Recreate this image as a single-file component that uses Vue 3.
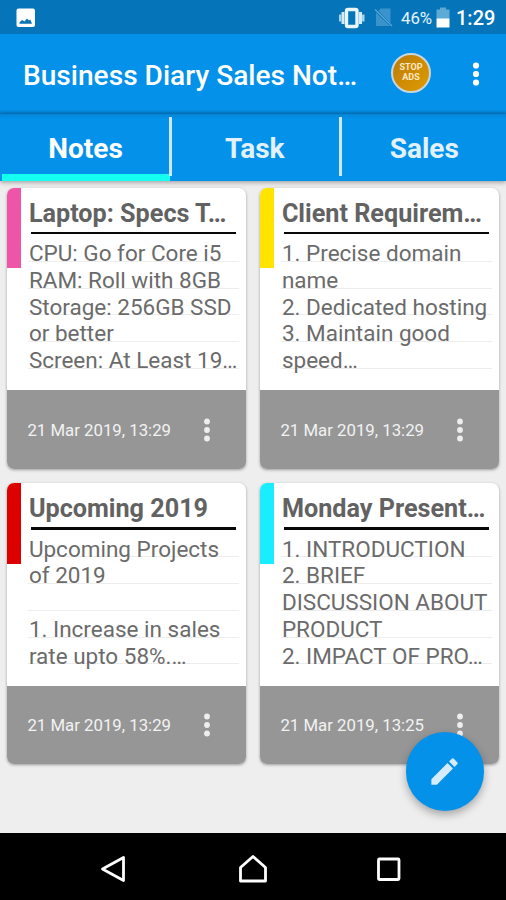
<script setup>
const notes = [
  { title: 'Laptop: Specs T…', tone: 'pink', date: '21 Mar 2019, 13:29', lines: ['CPU: Go for Core i5', 'RAM: Roll with 8GB', 'Storage: 256GB SSD', 'or better', 'Screen: At Least 19…'] },
  { title: 'Client Requirem…', tone: 'yellow', date: '21 Mar 2019, 13:29', lines: ['1. Precise domain', 'name', '2. Dedicated hosting', '3. Maintain good', 'speed…'] },
  { title: 'Upcoming 2019', tone: 'red', date: '21 Mar 2019, 13:29', lines: ['Upcoming Projects', 'of 2019', '', '1. Increase in sales', 'rate upto 58%.…'] },
  { title: 'Monday Present…', tone: 'cyan', date: '21 Mar 2019, 13:25', lines: ['1. INTRODUCTION', '2. BRIEF', 'DISCUSSION ABOUT', 'PRODUCT', '2. IMPACT OF PRO…'] },
]
const tabs = ['Notes', 'Task', 'Sales']
</script>

<template>
  <div class="screen">
    <header class="status">
      <svg class="photo" width="20" height="20" viewBox="0 0 20 20">
        <rect x=".5" y=".5" width="18.500" height="18.500" rx="2" fill="#fff" />
        <path d="M3.500 15.700v-1.200l2.500-2.500 2.500 1.500 2.500-3 2 2 1.300-1 1.700 4.200z" fill="#0574b8" />
      </svg>
      <svg class="vibrate" width="28" height="22" viewBox="0 0 28 22">
        <rect x="8.500" y="2.500" width="10.500" height="17" rx="1.500" fill="none" stroke="#e8f5fd" stroke-width="3.400" />
        <path d="M5 5v12M22.500 5v12" stroke="#d3eaf8" stroke-width="3" />
        <path d="M2.200 7.500v7M25.300 7.500v7" stroke="#a9d4ee" stroke-width="2.400" />
      </svg>
      <svg class="sim" width="20" height="21" viewBox="0 0 20 21">
        <path d="M6.500 1.500H16.500V16L4.500 4z" fill="#3a93ca" />
        <path d="M2 5.500L16 19H2z" fill="#3a93ca" />
        <path d="M1 2.500l17 16.500" stroke="#5aa8d6" stroke-width="1.300" />
      </svg>
      <span class="percent">46%</span>
      <svg class="battery" width="14" height="21" viewBox="0 0 14 21">
        <path d="M.5 2.500H4V.5h6v2h3.500V12H.5z" fill="#5eaad7" />
        <path d="M.5 11.500h13v9H.5z" fill="#fff" />
      </svg>
      <span class="clock">1:29</span>
    </header>

    <div class="appbar">
      <h1>Business Diary Sales Not…</h1>
      <div class="stop"><span>STOP</span><span>ADS</span></div>
      <svg class="more" width="8" height="24" viewBox="0 0 8 24" fill="#fff">
        <circle cx="4" cy="3.500" r="3.100" /><circle cx="4" cy="12" r="3.100" /><circle cx="4" cy="20.500" r="3.100" />
      </svg>
    </div>

    <nav class="tabs">
      <div v-for="(tab, i) in tabs" :key="tab" class="tab" :class="{ active: i === 0 }">{{ tab }}</div>
    </nav>

    <main class="grid">
      <article v-for="note in notes" :key="note.title" class="card">
        <div class="content">
          <div class="mark" :class="note.tone"></div>
          <div class="text">
            <h2>{{ note.title }}</h2>
            <div class="rule"></div>
            <p v-for="(line, i) in note.lines" :key="i">{{ line }}</p>
          </div>
        </div>
        <footer>
          <span>{{ note.date }}</span>
          <svg width="8" height="24" viewBox="0 0 8 24" fill="#eee">
            <circle cx="4" cy="3.500" r="2.900" /><circle cx="4" cy="12" r="2.900" /><circle cx="4" cy="20.500" r="2.900" />
          </svg>
        </footer>
      </article>
    </main>

    <button class="fab" aria-label="New note">
      <svg width="35" height="35" viewBox="0 0 24 24" fill="#d4ecfc">
        <path d="M3 17.250V21h3.750L17.810 9.940l-3.750-3.750L3 17.250zM20.710 7.040a1 1 0 0 0 0-1.410l-2.340-2.340a1 1 0 0 0-1.410 0l-1.830 1.830 3.750 3.750 1.830-1.830z" />
      </svg>
    </button>

    <div class="navbar">
      <svg width="28" height="30" viewBox="0 0 28 30"><path d="M3.500 15L24.500 3.500v23z" /></svg>
      <svg class="home" width="30" height="30" viewBox="0 0 30 30"><path d="M2.500 13.500L15 2.500l12.500 11v13.500h-25z" /></svg>
      <svg width="26" height="30" viewBox="0 0 26 30"><rect x="2.500" y="5" width="20.500" height="20.500" rx="1" /></svg>
    </div>
  </div>
</template>

<style>
body { margin: 0; }
</style>

<style scoped>
.screen {
  position: relative;
  display: flex;
  flex-direction: column;
  width: 506px;
  height: 900px;
  overflow: hidden;
  background: #eee;
  font-family: Roboto, sans-serif;
}
.status {
  display: flex;
  align-items: center;
  height: 34px;
  box-sizing: border-box;
  padding: 1px 12px 0 16px;
  background: #0574b8;
  color: #fff;
}
.vibrate { margin-left: auto; }
.sim { margin-left: 8px; }
.percent { margin-left: 7px; width: 33px; font-size: 16.800px; color: #e6f4fc; white-space: nowrap; }
.battery { margin-left: 2px; }
.clock { margin-left: 6px; width: 38px; font-size: 20px; font-weight: 500; white-space: nowrap; }
.appbar {
  display: flex;
  align-items: center;
  height: 80px;
  box-sizing: border-box;
  padding: 0 26px 0 23px;
  background: linear-gradient(#0491ea 76px, #0479c6);
}
h1 {
  flex: 1;
  margin: 0;
  padding-top: 2px;
  font-size: 28.100px;
  font-weight: 500;
  color: #fff;
  white-space: nowrap;
}
.stop {
  display: flex;
  flex-direction: column;
  align-items: center;
  justify-content: center;
  width: 40px;
  height: 40px;
  box-sizing: border-box;
  margin: 0 41px 3px 0;
  border: 2px solid #c9d6dc;
  border-radius: 50%;
  background: linear-gradient(135deg, #b87b08, #cf8b04 50%, #dc9c00);
  color: #fbe9c8;
  font-size: 9px;
  line-height: 9.500px;
  font-weight: 700;
}
.tabs {
  display: grid;
  grid-template-columns: 170px 169.500px 166.500px;
  height: 66.500px;
  background: linear-gradient(#0484d6, #0491ea 5px);
  box-shadow: 0 1px 5px rgba(0, 0, 0, 0.4);
}
.tab {
  position: relative;
  font-size: 28px;
  line-height: 69px;
  height: 66.500px;
  font-weight: 700;
  text-align: center;
  color: #e2f1fc;
}
.tab:last-child { padding-left: 3px; }
.tab.active { padding-left: 1px; color: #fff; }
.tab:not(:last-child)::after {
  content: '';
  position: absolute;
  right: -2px;
  top: 3px;
  width: 3px;
  height: 59px;
  background: #cfe7f9;
}
.tab.active::before {
  content: '';
  position: absolute;
  left: 2px;
  right: 0;
  bottom: 0;
  height: 7px;
  background: #14fff0;
}
.grid {
  display: grid;
  grid-template-columns: 239px 239px;
  grid-auto-rows: 281px;
  gap: 14.500px 14px;
  padding: 7px 7.400px 0;
}
.card {
  display: flex;
  flex-direction: column;
  overflow: hidden;
  border-radius: 7px;
  background: #fff;
  box-shadow: 0 1px 3px rgba(0, 0, 0, 0.35);
}
.content { display: flex; height: 202.500px; }
.mark { flex: none; width: 14px; height: 80.500px; }
.pink { background: #ee55a9; }
.yellow { background: #ffe400; }
.red { background: #dd0000; }
.cyan { background: #19edff; }
.text { width: 211px; padding-left: 7px; }
h2 {
  margin: 0;
  padding-left: .5px;
  height: 44px;
  font-size: 25.200px;
  line-height: 51px;
  font-weight: 700;
  color: #626262;
  white-space: nowrap;
}
.rule { width: 205px; height: 2.500px; margin-left: 3px; background: #080808; }
p {
  box-sizing: border-box;
  height: 26.800px;
  margin: 0;
  padding-left: .5px;
  font-size: 22.500px;
  line-height: 36px;
  color: #6b6b6b;
  white-space: nowrap;
  background: linear-gradient(#ededed, #ededed) 0 100% / 100% 1px no-repeat;
}
.rule + p { margin-top: 1px; }
footer {
  flex: 1;
  display: flex;
  align-items: center;
  padding: 1px 0 0 20px;
  background: #969696;
  color: #f2f2f2;
  font-size: 16.800px;
  white-space: nowrap;
}
footer span { width: 175.500px; }
.fab {
  position: absolute;
  left: 405.500px;
  top: 732px;
  display: flex;
  align-items: center;
  justify-content: center;
  width: 78.500px;
  height: 78.500px;
  padding: 0;
  border: 0;
  border-radius: 50%;
  background: #0491ea;
  box-shadow: 0 4px 8px rgba(0, 0, 0, 0.3);
}
.navbar {
  display: flex;
  align-items: center;
  justify-content: space-between;
  box-sizing: border-box;
  height: 67px;
  margin-top: auto;
  padding: 4px 104px 0 99px;
  background: #000;
}
.navbar svg { fill: none; stroke: #fff; stroke-width: 2.800; stroke-linejoin: round; }
.navbar .home { margin-left: 3px; }
</style>
